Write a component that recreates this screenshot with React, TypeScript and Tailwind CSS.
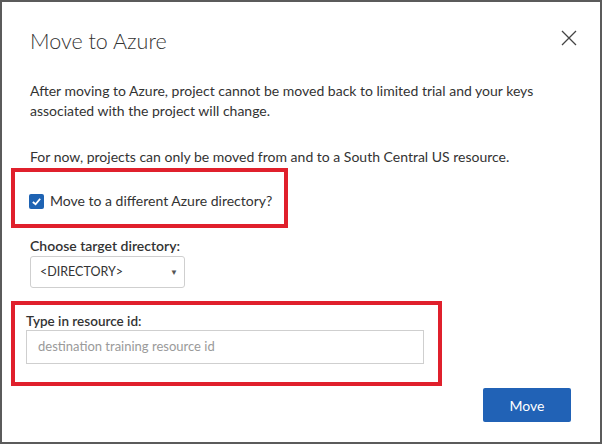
export default function App() {
  return (
    <div
      className="relative h-[444px] w-[602px] overflow-hidden border-2 border-[#5b5b5b] bg-white text-[#333]"
      style={{ fontFamily: 'Lato, "Open Sans", sans-serif' }}
    >
      <div className="absolute left-[60px] top-[-2px] h-px w-[493px] bg-[#1d2a17]" />
      <div className="flex flex-col pl-[28px] pr-[28px] pt-[25px]">
        <div className="flex items-start justify-between">
          <h1 className="text-[21.5px] font-light leading-[28px] text-[#333]">Move to Azure</h1>
          <button className="mr-[-5px] mt-[3px] text-[#444]">
            <svg width="16" height="16" viewBox="0 0 16 16" fill="none" stroke="currentColor" strokeWidth="1.3">
              <path d="M1 1 L15 15 M15 1 L1 15" />
            </svg>
          </button>
        </div>

        <p className="mt-[26px] text-[14px] leading-[20px]">
          After moving to Azure, project cannot be moved back to limited trial and your keys
          <br />
          associated with the project will change.
        </p>
        <p className="mt-[26px] text-[14px] leading-[20px]">
          For now, projects can only be moved from and to a South Central US resource.
        </p>

        <div className="ml-[-19px] mt-[1px] w-[277px] border-4 border-[#e0202c] pb-[15px] pl-[14px] pt-[21px]">
          <label className="flex items-center gap-[6px] text-[14px] leading-[16px]">
            <span className="flex h-[15px] w-[15px] items-center justify-center rounded-[2px] bg-[#1e63b3]">
              <svg width="11" height="11" viewBox="0 0 12 12" fill="none" stroke="white" strokeWidth="2">
                <path d="M2 6.5 L5 9 L10 3" />
              </svg>
            </span>
            Move to a different Azure directory?
          </label>
        </div>

        <div className="mt-[9px] text-[14px] font-semibold leading-[18px]">Choose target directory:</div>
        <div className="mt-[1px] flex h-[32px] w-[155px] items-center justify-between rounded-[3px] border border-[#cfcfcf] pl-[9px] pr-[6px] text-[12.5px]">
          <span>&lt;DIRECTORY&gt;</span>
          <span className="text-[8px] text-[#555]">▼</span>
        </div>

        <div className="ml-[-19px] mt-[13px] w-[431px] border-4 border-[#e0202c] pb-[18px] pl-[11px] pt-[7px]">
          <div className="text-[13.5px] font-semibold leading-[18px]">Type in resource id:</div>
          <div className="flex h-[34px] w-[398px] items-center border border-[#cfcfcf] pl-[11px] text-[13px] text-[#9a9a9a]">
            destination training resource id
          </div>
        </div>

        <div className="mt-[2px] flex justify-end pr-[1px]">
          <button className="h-[34px] w-[88px] rounded-[2px] bg-[#2162b6] text-[14px] text-white">Move</button>
        </div>
      </div>
    </div>
  );
}
